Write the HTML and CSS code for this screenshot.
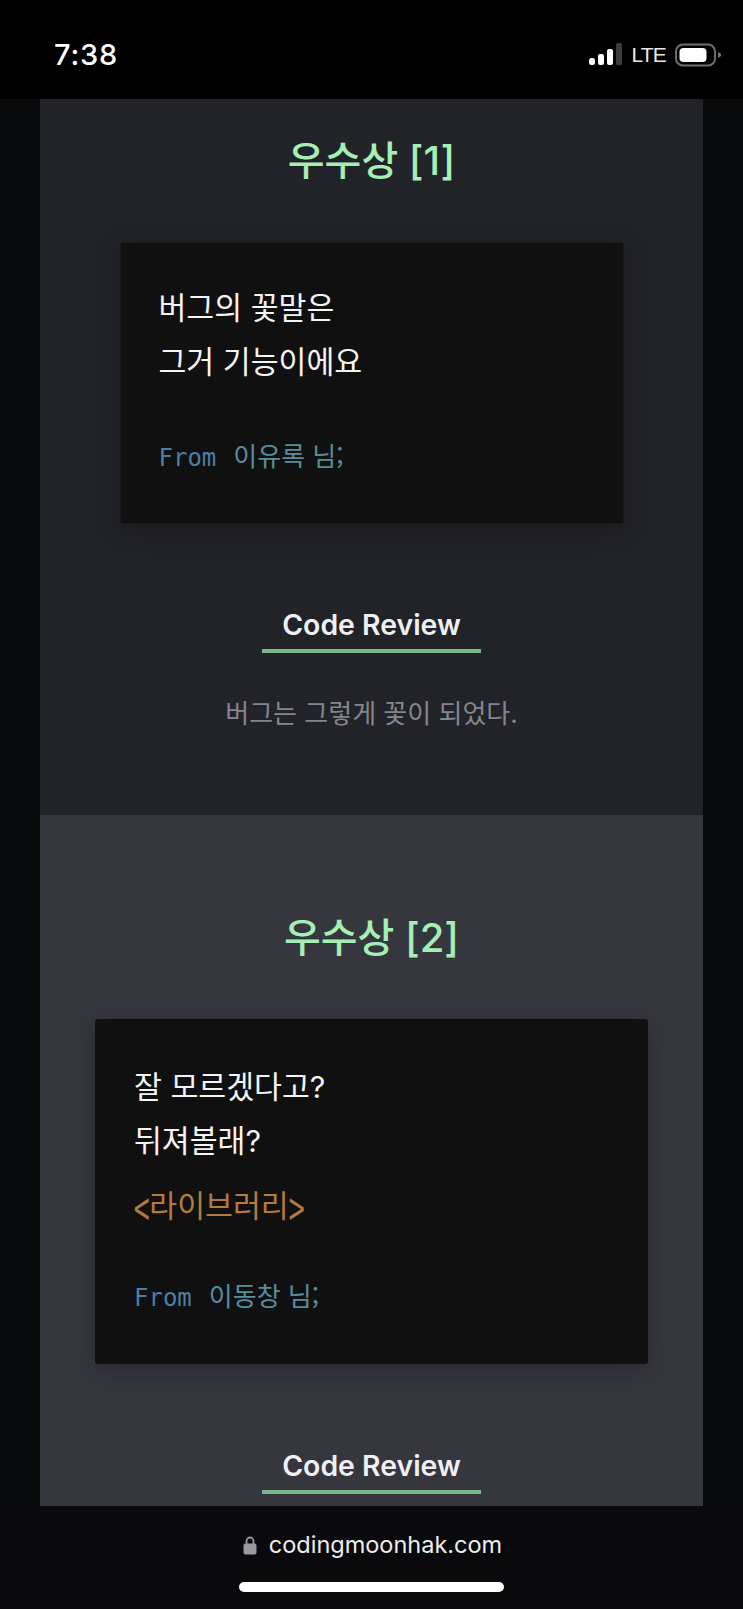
FILE: index.html
```html
<!DOCTYPE html>
<html lang="ko">

<head>
    <meta charset="UTF-8">
    <meta name="viewport" content="width=device-width, initial-scale=1.0">
    <title>코딩문학</title>
    <link rel="stylesheet" href="styles.css">
</head>

<body>
    <div class="phone">
        <header class="status-bar">
            <span class="time">7:38</span>
            <div class="status-icons">
                <svg class="signal" width="33" height="23" viewBox="0 0 33 23">
                    <rect x="0" y="15" width="6" height="7" rx="2.5" fill="#fff" />
                    <rect x="9" y="11" width="6" height="11" rx="2" fill="#fff" />
                    <rect x="18" y="6" width="6" height="16" rx="2" fill="#fff" />
                    <rect x="27" y="0" width="6" height="22" rx="1.500" fill="#3c3c40" />
                </svg>
                <span class="network">LTE</span>
                <svg class="battery" width="46" height="24" viewBox="0 0 46 24">
                    <rect x="1" y="1.500" width="39" height="21" rx="7" fill="none" stroke="#6f6f73" stroke-width="2" />
                    <rect x="4.500" y="5" width="27" height="14" rx="4" fill="#fff" />
                    <path d="M43 9 L46 11 Q46.500 12 46 13 L43 15 Z" fill="#77777b" />
                </svg>
            </div>
        </header>

        <main class="page">
            <section class="award award-dark">
                <h2 class="award-title">우수상 [1]</h2>
                <div class="poem poem-narrow">
                    <p class="poem-line">버그의 꽃말은</p>
                    <p class="poem-line">그거 기능이에요</p>
                    <p class="poem-from"><span class="from-word">From</span><span class="from-name">이유록 님;</span></p>
                </div>
                <h3 class="review-title">Code Review</h3>
                <p class="review-text">버그는 그렇게 꽃이 되었다.</p>
            </section>

            <section class="award award-light">
                <h2 class="award-title">우수상 [2]</h2>
                <div class="poem poem-wide">
                    <p class="poem-line">잘 모르겠다고?</p>
                    <p class="poem-line">뒤져볼래?</p>
                    <p class="poem-line poem-tag"><span class="angle">&lt;</span>라이브러리<span class="angle">&gt;</span></p>
                    <p class="poem-from"><span class="from-word">From</span><span class="from-name">이동창 님;</span></p>
                </div>
                <h3 class="review-title">Code Review</h3>
            </section>
        </main>

        <footer class="url-bar">
            <div class="url">
                <svg class="lock" width="14" height="19" viewBox="0 0 14 19">
                    <path d="M3.500 8 V5 a3.500 3.500 0 0 1 7 0 V8" fill="none" stroke="#98989e" stroke-width="1.800" />
                    <rect x="0.500" y="7.500" width="13" height="11" rx="2" fill="#98989e" />
                </svg>
                <span>codingmoonhak.com</span>
            </div>
            <div class="home-bar"></div>
        </footer>
    </div>
</body>

</html>
```

FILE: styles.css
```css
* {
    box-sizing: border-box;
}

body {
    margin: 0;
    background-color: #08090b;
    font-family: Inter, "Noto Sans CJK KR", sans-serif;
}

p,
h2,
h3 {
    margin: 0;
}

.phone {
    display: flex;
    flex-direction: column;
    height: 1609px;
    overflow: hidden;
}

/* status bar */
.status-bar {
    flex: none;
    display: flex;
    justify-content: space-between;
    align-items: center;
    height: 99px;
    padding: 10px 22px 0 54px;
    background-color: #000;
    color: #fff;
}

.time {
    font-size: 29px;
    font-weight: 500;
    letter-spacing: 0.8px;
}

.status-icons {
    display: flex;
    align-items: center;
    gap: 9px;
}

.network {
    font-family: "Liberation Sans", sans-serif;
    font-size: 21px;
    letter-spacing: -0.8px;
    color: #e8e8e8;
}

/* sections */
.page {
    flex: 1;
    min-height: 0;
    margin: 0 40px;
    overflow: hidden;
}

.award {
    display: flex;
    flex-direction: column;
    align-items: center;
}

.award-dark {
    height: 716px;
    background-color: #222329;
    padding-top: 32px;
}

.award-light {
    height: 700px;
    background-color: #36363f;
    padding-top: 93px;
}

.award-title {
    font-size: 40px;
    line-height: 60px;
    font-weight: 500;
    color: #a5eeb4;
}

.poem {
    background-color: #101011;
    border-radius: 3px;
    box-shadow: 0 6px 24px rgba(0, 0, 0, 0.25);
}

.poem-narrow {
    width: 504px;
    height: 282px;
    margin: 51px 0 81px;
    padding: 38px 0 0 38px;
    border: 1px solid #1a1a1d;
}

.poem-wide {
    width: 553px;
    height: 345px;
    margin: 51px 0 82px;
    padding: 41px 0 0 39px;
}

.poem-line {
    font-size: 30.300px;
    line-height: 54px;
    color: #f4f4f4;
}

.poem-tag {
    margin-top: 11px;
    color: #b47a3e;
}

.angle {
    display: inline-block;
    margin: 0 -4px;
    font-family: "Noto Sans CJK KR", sans-serif;
    font-size: 42px;
    line-height: 54px;
    vertical-align: top;
    transform: scale(0.68, 1.15);
}

.poem-from {
    margin-top: 46px;
    font-family: "DejaVu Sans Mono", monospace;
    font-size: 24px;
    line-height: 40px;
}

.poem-wide .poem-from {
    margin-top: 42px;
}

.from-word {
    color: #4d7fa5;
    margin-right: 17px;
}

.from-name {
    font-family: "Noto Sans CJK KR", sans-serif;
    font-size: 26px;
    color: #5a8c9b;
}

.review-title {
    width: 219px;
    padding-bottom: 4px;
    border-bottom: 4px solid #7ab88a;
    text-align: center;
    font-size: 28.400px;
    line-height: 40px;
    font-weight: 600;
    color: #f0f0f2;
}

.review-text {
    margin-top: 41px;
    font-size: 26px;
    line-height: 40px;
    color: #85858f;
}

/* browser bottom bar */
.url-bar {
    flex: none;
    display: flex;
    flex-direction: column;
    align-items: center;
    height: 103px;
    padding-top: 24px;
    background-color: #0a0a0c;
}

.url {
    display: flex;
    align-items: center;
    gap: 12px;
    padding-left: 2px;
    font-size: 23.500px;
    line-height: 30px;
    color: #eeeeee;
}

.home-bar {
    width: 265px;
    height: 10px;
    margin-top: 22px;
    border-radius: 5px;
    background-color: #fff;
}
```
